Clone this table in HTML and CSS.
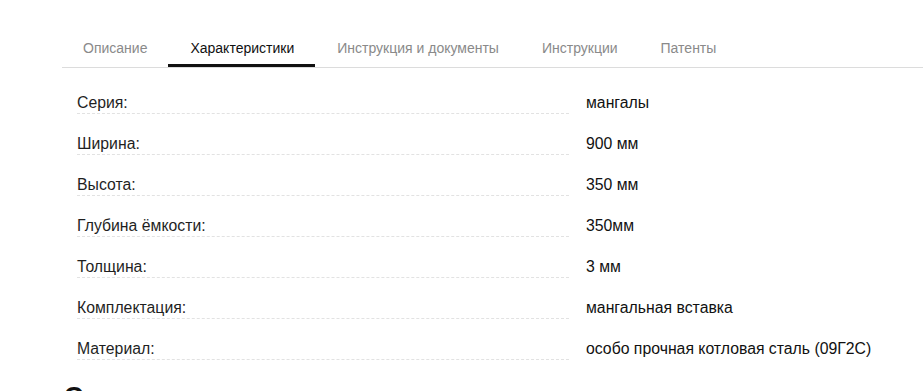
FILE: index.html
```html
<!DOCTYPE html>
<html lang="ru">
<head>
<meta charset="utf-8">
<link rel="stylesheet" href="styles.css">
</head>
<body>
<div class="product">
  <nav class="tabs">
    <a class="tab">Описание</a>
    <a class="tab active">Характеристики</a>
    <a class="tab">Инструкция и документы</a>
    <a class="tab">Инструкции</a>
    <a class="tab">Патенты</a>
  </nav>
  <div class="specs">
    <div class="row"><div class="label">Серия:</div><div class="value">мангалы</div></div>
    <div class="row"><div class="label">Ширина:</div><div class="value">900 мм</div></div>
    <div class="row"><div class="label">Высота:</div><div class="value">350 мм</div></div>
    <div class="row"><div class="label">Глубина ёмкости:</div><div class="value">350мм</div></div>
    <div class="row"><div class="label">Толщина:</div><div class="value">3 мм</div></div>
    <div class="row"><div class="label">Комплектация:</div><div class="value">мангальная вставка</div></div>
    <div class="row"><div class="label">Материал:</div><div class="value">особо прочная котловая сталь (09Г2С)</div></div>
  </div>
  <h2 class="section-title">Отзывы</h2>
</div>
</body>
</html>
```
FILE: styles.css
```css
html, body {
  margin: 0;
  padding: 0;
  background: #fff;
  overflow: hidden;
}
body {
  font-family: "Liberation Sans", Arial, sans-serif;
  color: #1a1a1a;
}
.product {
  margin: 30px 0 0 62px;
}
.tabs {
  display: flex;
  border-bottom: 1px solid #dcdcdc;
}
.tab {
  display: block;
  padding: 8px 21px 6px 22px;
  font-size: 14px;
  line-height: 20px;
  color: #8a8a8a;
  border-bottom: 3px solid transparent;
  cursor: pointer;
}
.tab:first-child {
  padding-left: 21px;
}
.tab.active {
  color: #111;
  border-bottom-color: #111;
}
.specs {
  padding: 25px 0 0 15px;
  display: flex;
  flex-direction: column;
  gap: 20px;
}
.row {
  display: grid;
  grid-template-columns: 492px 1fr;
  column-gap: 17px;
  font-size: 15.8px;
  line-height: 20px;
}
.label {
  color: #1f1f1f;
  border-bottom: 1px dashed #e2e2e2;
}
.value {
  color: #111;
}
.section-title {
  margin: 20px 0 0 2px;
  font-size: 26px;
  line-height: 32px;
  font-weight: 700;
  color: #111;
}
```
